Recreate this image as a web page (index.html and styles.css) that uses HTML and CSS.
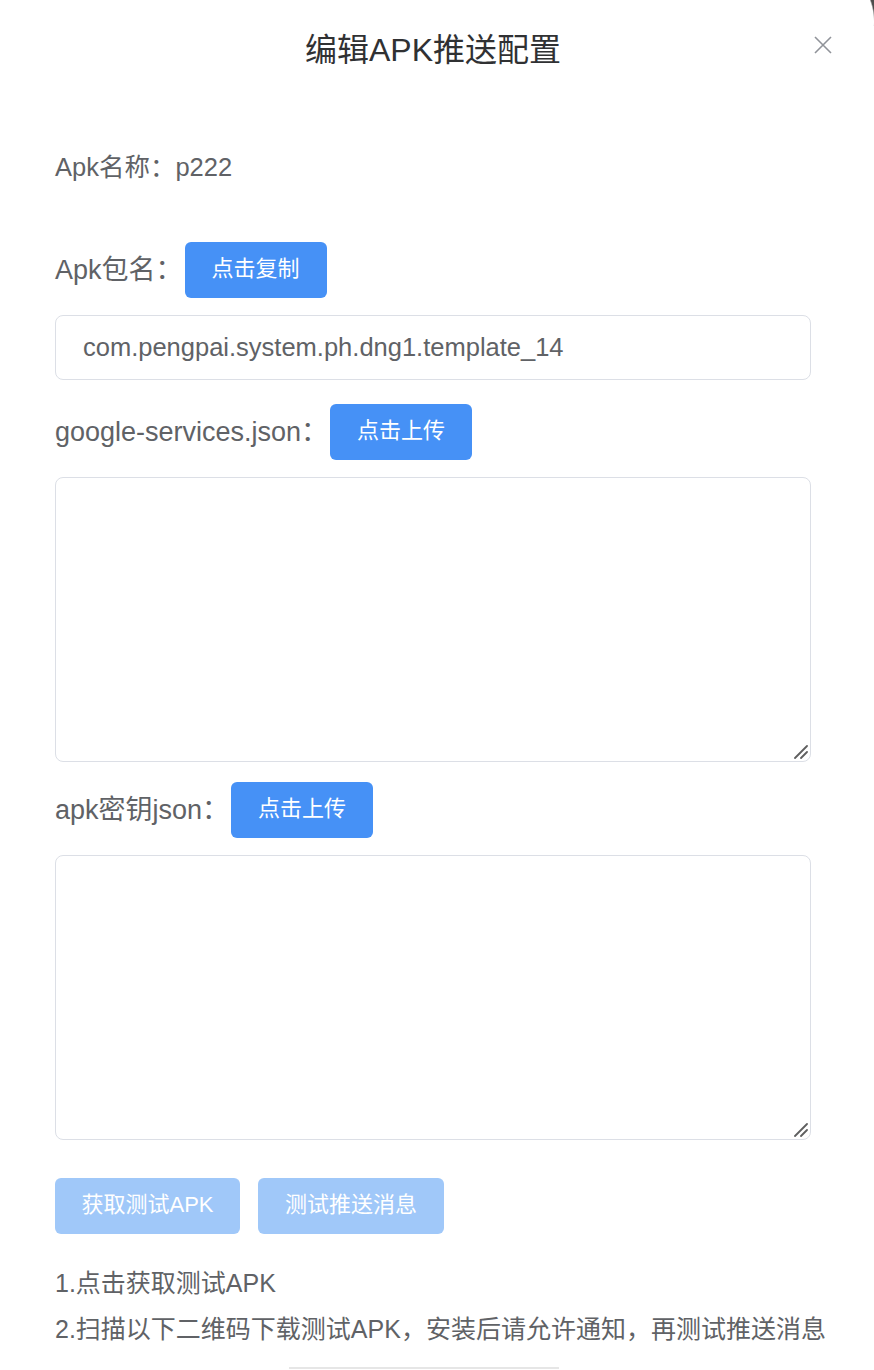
FILE: index.html
```html
<!DOCTYPE html>
<html lang="zh-CN">
<head>
<meta charset="utf-8">
<title>编辑APK推送配置</title>
<link rel="stylesheet" href="styles.css">
</head>
<body>
<div class="corner"></div>
<div class="dialog">
  <header class="dialog-header">
    <h1 class="dialog-title">编辑APK推送配置</h1>
    <button class="close-btn" aria-label="关闭">
      <svg width="20" height="20" viewBox="0 0 20 20"><path d="M2 2L18 18M18 2L2 18" stroke="#909399" stroke-width="1.6" fill="none"/></svg>
    </button>
  </header>
  <main class="dialog-body">
    <div class="info">Apk名称：p222</div>

    <div class="field-row first">
      <span class="label">Apk包名：</span>
      <button class="btn btn-primary">点击复制</button>
    </div>
    <input class="text-input" type="text" value="com.pengpai.system.ph.dng1.template_14">

    <div class="field-row">
      <span class="label">google-services.json：</span>
      <button class="btn btn-primary">点击上传</button>
    </div>
    <div class="area-wrap">
      <textarea class="text-area"></textarea>
      <svg class="grip" width="14" height="14" viewBox="0 0 14 14"><path d="M1 13L13 1M7 13L13 7" stroke="#5f5f5f" stroke-width="1.8" stroke-linecap="round" fill="none"/></svg>
    </div>

    <div class="field-row r3">
      <span class="label">apk密钥json：</span>
      <button class="btn btn-primary">点击上传</button>
    </div>
    <div class="area-wrap">
      <textarea class="text-area"></textarea>
      <svg class="grip" width="14" height="14" viewBox="0 0 14 14"><path d="M1 13L13 1M7 13L13 7" stroke="#5f5f5f" stroke-width="1.8" stroke-linecap="round" fill="none"/></svg>
    </div>

    <div class="actions">
      <button class="btn btn-disabled wide1">获取测试APK</button>
      <button class="btn btn-disabled wide2">测试推送消息</button>
    </div>

    <div class="notes">
      <p>1.点击获取测试APK</p>
      <p>2.扫描以下二维码下载测试APK，安装后请允许通知，再测试推送消息</p>
    </div>
    <div class="qr-box"></div>
  </main>
</div>
</body>
</html>
```

FILE: styles.css
```css
* { box-sizing: border-box; }
html, body {
  margin: 0;
  padding: 0;
  background: #ffffff;
}
body {
  font-family: "Liberation Sans", "Noto Sans CJK SC", sans-serif;
  color: #606266;
  position: relative;
  overflow: hidden;
}
.corner {
  position: absolute;
  top: 0;
  right: 0;
  width: 8px;
  height: 26px;
  background: radial-gradient(circle at -54.5px 22px, rgba(0,0,0,0) 62px, #4d4d4d 63.5px);
}
.dialog {
  padding: 0 63px 0 55px;
  width: 874px;
}
.dialog-header {
  position: relative;
  height: 100px;
  display: flex;
  align-items: center;
  justify-content: center;
}
.dialog-title {
  margin: 0;
  font-size: 32px;
  font-weight: normal;
  line-height: 40px;
  color: #303133;
}
.close-btn {
  position: absolute;
  right: -22px;
  top: 35px;
  width: 20px;
  height: 20px;
  padding: 0;
  border: 0;
  background: none;
  display: flex;
}
.dialog-body {
  padding-top: 49px;
}
.info {
  font-size: 25.5px;
  line-height: 36px;
}
.field-row {
  display: flex;
  align-items: center;
  gap: 2px;
  height: 56px;
  margin-top: 24px;
}
.field-row.first { margin-top: 57px; }
.field-row.r3 { margin-top: 20px; }
.label {
  font-size: 27px;
  line-height: 36px;
  color: #606266;
}
.btn {
  height: 56px;
  border: 0;
  border-radius: 6px;
  color: #ffffff;
  font-family: "Liberation Sans", "Noto Sans CJK SC", sans-serif;
  font-size: 22px;
  line-height: 30px;
  padding: 0 0 3px;
  width: 142px;
  white-space: nowrap;
  cursor: pointer;
}
.btn-primary { background: #4691f6; }
.btn-disabled { background: #a0c8f9; }
.wide1 { width: 185px; }
.wide2 { width: 186px; }
.text-input {
  display: block;
  width: 756px;
  height: 65px;
  margin-top: 17px;
  border: 1.5px solid #dcdfe6;
  border-radius: 8px;
  padding: 0 27px;
  font-family: "Liberation Sans", "Noto Sans CJK SC", sans-serif;
  font-size: 25.5px;
  color: #606266;
  outline: none;
}
.area-wrap {
  position: relative;
  margin-top: 17px;
  width: 756px;
  height: 285px;
}
.text-area {
  display: block;
  width: 100%;
  height: 100%;
  border: 1.5px solid #dcdfe6;
  border-radius: 8px;
  padding: 10px 27px;
  font-family: "Liberation Sans", "Noto Sans CJK SC", sans-serif;
  font-size: 25px;
  color: #606266;
  outline: none;
  resize: none;
}
.grip {
  position: absolute;
  right: 3px;
  bottom: 3px;
}
.actions {
  display: flex;
  gap: 18px;
  margin-top: 38px;
}
.notes {
  margin-top: 26px;
  font-size: 25px;
  line-height: 46px;
}
.notes p {
  margin: 0;
  white-space: nowrap;
}
.qr-box {
  margin-top: 15px;
  margin-left: 234px;
  width: 270px;
  height: 40px;
  border-top: 2px solid #e6e6e6;
}
```
